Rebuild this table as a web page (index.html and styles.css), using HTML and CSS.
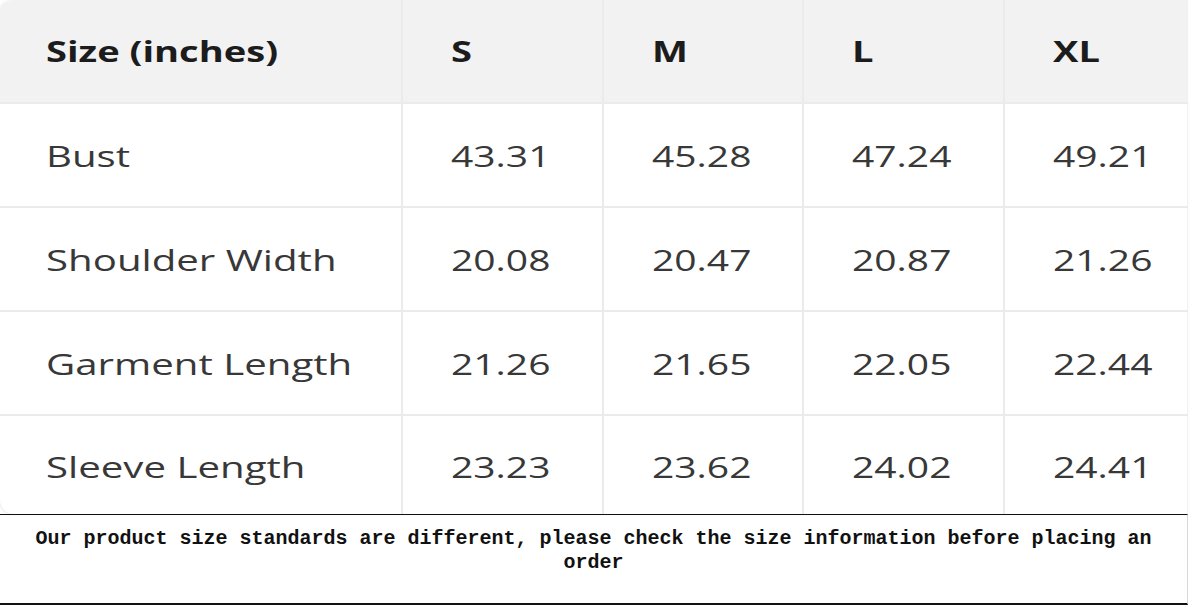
FILE: index.html
```html
<!DOCTYPE html>
<html>
<head>
<meta charset="utf-8">
<link rel="stylesheet" href="styles.css">
</head>
<body>
<div class="sheet">
  <div class="card">
    <table class="sizes">
      <colgroup>
        <col class="c-label"><col class="c-s"><col class="c-m"><col class="c-l"><col class="c-xl">
      </colgroup>
      <thead>
        <tr><th><span class="t">Size (inches)</span></th><th><span class="t">S</span></th><th><span class="t">M</span></th><th><span class="t">L</span></th><th><span class="t">XL</span></th></tr>
      </thead>
      <tbody>
        <tr><td><span class="t">Bust</span></td><td><span class="t">43.31</span></td><td><span class="t">45.28</span></td><td><span class="t">47.24</span></td><td><span class="t">49.21</span></td></tr>
        <tr><td><span class="t">Shoulder Width</span></td><td><span class="t">20.08</span></td><td><span class="t">20.47</span></td><td><span class="t">20.87</span></td><td><span class="t">21.26</span></td></tr>
        <tr><td><span class="t">Garment Length</span></td><td><span class="t">21.26</span></td><td><span class="t">21.65</span></td><td><span class="t">22.05</span></td><td><span class="t">22.44</span></td></tr>
        <tr class="last"><td><span class="t">Sleeve Length</span></td><td><span class="t">23.23</span></td><td><span class="t">23.62</span></td><td><span class="t">24.02</span></td><td><span class="t">24.41</span></td></tr>
      </tbody>
    </table>
  </div>
  <div class="note">Our product size standards are different, please check the size information before placing an order</div>
</div>
</body>
</html>
```

FILE: styles.css
```css
html, body {
  margin: 0;
  padding: 0;
  background: #ffffff;
}
.sheet {
  width: 1188px;
}
.card {
  border-radius: 14px 0 0 14px;
  overflow: hidden;
  box-shadow: -1px 0 3px rgba(0,0,0,0.10);
  height: 514px;
}
.sizes {
  border-collapse: collapse;
  table-layout: fixed;
  width: 1188px;
  font-family: "Open Sans", "Liberation Sans", sans-serif;
}
.c-label { width: 402px; }
.c-s { width: 201px; }
.c-m { width: 200px; }
.c-l { width: 201px; }
.c-xl { width: 184px; }
.sizes th, .sizes td {
  border: 2px solid #ebebeb;
  text-align: left;
  padding: 0 0 0 48px;
  height: 102px;
  vertical-align: middle;
  white-space: nowrap;
}
.sizes tr > :first-child { border-left: none; padding-left: 46px; }
.sizes thead tr > * { border-top: none; }
.sizes tr > :last-child { border-right-color: #f2f2f2; }
.sizes th {
  background: #f2f2f2;
  color: #1c1c1c;
  font-weight: 700;
  font-size: 28px;
  height: 102px;
}
.sizes td {
  color: #383838;
  font-size: 30px;
  font-weight: 400;
}
.sizes tr.last td { border-bottom: none; height: 100px; }
.t {
  display: inline-block;
  transform: scaleX(1.3);
  transform-origin: left center;
}
.sizes th .t { transform: scaleX(1.36); }
.sizes td:first-child .t { transform: scaleX(1.34); }
.note {
  border-top: 1px solid #111;
  border-bottom: 2px solid #111;
  border-right: 1px solid #d8d8d8;
  height: 76px;
  padding: 12px 20px 0;
  box-sizing: content-box;
  font-family: "Liberation Mono", "DejaVu Sans Mono", monospace;
  font-weight: 700;
  font-size: 20px;
  letter-spacing: 0;
  line-height: 24px;
  color: #111;
  text-align: center;
}
```
